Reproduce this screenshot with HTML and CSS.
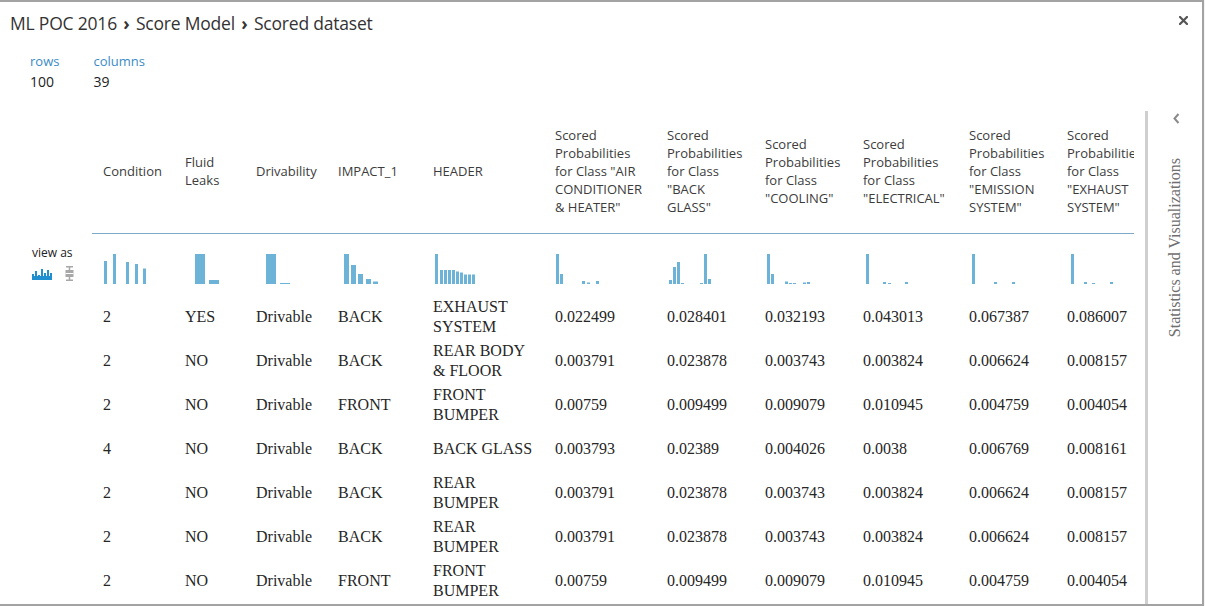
FILE: index.html
```html
<!DOCTYPE html>
<html lang="en">
<head>
<meta charset="utf-8">
<title>Scored dataset</title>
<link rel="stylesheet" href="styles.css">
</head>
<body>
<div class="dialog">
  <header class="titlebar">
    <h1 class="crumbs">ML POC 2016 <span class="sep">›</span> Score Model <span class="sep">›</span> Scored dataset</h1>
    <button class="close" aria-label="Close">
      <svg width="9" height="9" viewBox="0 0 9 9"><path d="M1 1 L8 8 M8 1 L1 8" stroke="#555" stroke-width="2.2" stroke-linecap="square"/></svg>
    </button>
  </header>
  <div class="content">
    <div class="main">
      <div class="stats">
        <div class="stat"><div class="stat-label">rows</div><div class="stat-value">100</div></div>
        <div class="stat"><div class="stat-label">columns</div><div class="stat-value">39</div></div>
      </div>
      <div class="grid-area">
        <div class="viewas">
          <div class="viewas-label">view as</div>
          <div class="viewas-icons">
            <svg class="ico-hist" width="20" height="12" viewBox="0 0 20 12"><path d="M0 12 V6 H2 V8 H3 V3 H5 V8 H6 V7 H8 V8 H9 V1 H11 V8 H12 V5 H14 V8 H15 V2 H17 V8 H18 V5 H20 V12 Z" fill="#1f8fcf"/></svg>
            <svg class="ico-box" width="9" height="15" viewBox="0 0 9 15"><path d="M1 0.75 H8 M1 14.25 H8 M4.5 0.75 V14.25" stroke="#a8a8a8" stroke-width="1.5"/><rect x="0.5" y="4" width="8" height="7" fill="#a8a8a8"/><path d="M0.5 7.5 H8.5" stroke="#fff" stroke-width="1"/></svg>
          </div>
        </div>
        <div class="table-wrap">
          <table class="data">
            <colgroup>
              <col class="w82"><col class="w71"><col class="w82"><col class="w95"><col class="w122"><col class="w112"><col class="w98"><col class="w98"><col class="w106"><col class="w98"><col class="w110">
            </colgroup>
            <thead>
              <tr class="head">
                <th>Condition</th>
                <th>Fluid<br>Leaks</th>
                <th>Drivability</th>
                <th>IMPACT_1</th>
                <th>HEADER</th>
                <th>Scored<br>Probabilities<br>for Class "AIR<br>CONDITIONER<br>&amp; HEATER"</th>
                <th>Scored<br>Probabilities<br>for Class<br>"BACK<br>GLASS"</th>
                <th>Scored<br>Probabilities<br>for Class<br>"COOLING"</th>
                <th>Scored<br>Probabilities<br>for Class<br>"ELECTRICAL"</th>
                <th>Scored<br>Probabilities<br>for Class<br>"EMISSION<br>SYSTEM"</th>
                <th>Scored<br>Probabilities<br>for Class<br>"EXHAUST<br>SYSTEM"</th>
              </tr>
              <tr class="spark">
                <td><svg width="60" height="30"><rect x="1" y="7" width="3" height="23"/><rect x="10" y="0" width="3" height="30"/><rect x="23" y="8" width="3" height="22"/><rect x="32" y="10" width="3" height="20"/><rect x="40" y="14.5" width="3" height="15.5"/></svg></td>
                <td><svg width="60" height="30"><rect x="10" y="0" width="10" height="30"/><rect x="24" y="26" width="10" height="4"/></svg></td>
                <td><svg width="60" height="30"><rect x="10" y="0" width="10" height="30"/><rect x="24" y="29" width="10" height="1"/></svg></td>
                <td><svg width="60" height="30"><rect x="6" y="0" width="5" height="30"/><rect x="13" y="11" width="5" height="19"/><rect x="20" y="20" width="5" height="10"/><rect x="28" y="25" width="5" height="5"/><rect x="35" y="27.5" width="5" height="2.5"/></svg></td>
                <td><svg width="60" height="30"><rect x="2" y="0" width="3" height="30"/><rect x="7" y="16" width="3" height="14"/><rect x="11" y="16" width="3" height="14"/><rect x="15" y="16" width="3" height="14"/><rect x="19" y="16" width="3" height="14"/><rect x="23" y="17.5" width="3" height="12.5"/><rect x="27" y="18.5" width="3" height="11.5"/><rect x="31" y="20.5" width="3" height="9.5"/><rect x="35" y="20.5" width="3" height="9.5"/><rect x="39" y="20.5" width="3" height="9.5"/></svg></td>
                <td><svg width="60" height="30"><rect x="1" y="0" width="3" height="30"/><rect x="5" y="20" width="3" height="10"/><rect x="27" y="27" width="3" height="3"/><rect x="32" y="28.5" width="3" height="1.5"/><rect x="41" y="27" width="3" height="3"/></svg></td>
                <td><svg width="60" height="30"><rect x="2" y="26" width="3" height="4"/><rect x="6" y="13" width="3" height="17"/><rect x="10" y="8" width="3" height="22"/><rect x="14" y="29" width="3" height="1"/><rect x="33" y="29" width="3" height="1"/><rect x="37" y="0" width="3" height="30"/><rect x="41" y="25" width="3" height="5"/></svg></td>
                <td><svg width="60" height="30"><rect x="2" y="0" width="3" height="30"/><rect x="6" y="20" width="3" height="10"/><rect x="20" y="27.5" width="3" height="2.5"/><rect x="24" y="29" width="3" height="1"/><rect x="28" y="29" width="3" height="1"/><rect x="38" y="28.5" width="3" height="1.5"/><rect x="42" y="28" width="3" height="2"/></svg></td>
                <td><svg width="60" height="30"><rect x="3" y="0" width="3" height="30"/><rect x="20" y="28" width="3" height="2"/><rect x="25" y="29" width="3" height="1"/><rect x="42" y="28" width="3" height="2"/></svg></td>
                <td><svg width="60" height="30"><rect x="3" y="0" width="3" height="30"/><rect x="25" y="28" width="3" height="2"/><rect x="43" y="28" width="3" height="2"/></svg></td>
                <td><svg width="60" height="30"><rect x="4" y="0" width="3" height="30"/><rect x="17" y="28" width="3" height="2"/><rect x="25" y="29" width="3" height="1"/><rect x="43" y="28" width="3" height="2"/></svg></td>
              </tr>
            </thead>
            <tbody>
              <tr><td>2</td><td>YES</td><td>Drivable</td><td>BACK</td><td>EXHAUST SYSTEM</td><td>0.022499</td><td>0.028401</td><td>0.032193</td><td>0.043013</td><td>0.067387</td><td>0.086007</td></tr>
              <tr><td>2</td><td>NO</td><td>Drivable</td><td>BACK</td><td>REAR BODY &amp; FLOOR</td><td>0.003791</td><td>0.023878</td><td>0.003743</td><td>0.003824</td><td>0.006624</td><td>0.008157</td></tr>
              <tr><td>2</td><td>NO</td><td>Drivable</td><td>FRONT</td><td>FRONT BUMPER</td><td>0.00759</td><td>0.009499</td><td>0.009079</td><td>0.010945</td><td>0.004759</td><td>0.004054</td></tr>
              <tr><td>4</td><td>NO</td><td>Drivable</td><td>BACK</td><td>BACK GLASS</td><td>0.003793</td><td>0.02389</td><td>0.004026</td><td>0.0038</td><td>0.006769</td><td>0.008161</td></tr>
              <tr><td>2</td><td>NO</td><td>Drivable</td><td>BACK</td><td>REAR BUMPER</td><td>0.003791</td><td>0.023878</td><td>0.003743</td><td>0.003824</td><td>0.006624</td><td>0.008157</td></tr>
              <tr><td>2</td><td>NO</td><td>Drivable</td><td>BACK</td><td>REAR BUMPER</td><td>0.003791</td><td>0.023878</td><td>0.003743</td><td>0.003824</td><td>0.006624</td><td>0.008157</td></tr>
              <tr><td>2</td><td>NO</td><td>Drivable</td><td>FRONT</td><td>FRONT BUMPER</td><td>0.00759</td><td>0.009499</td><td>0.009079</td><td>0.010945</td><td>0.004759</td><td>0.004054</td></tr>
            </tbody>
          </table>
        </div>
      </div>
    </div>
    <aside class="sidebar">
      <svg class="chev" width="7" height="11" viewBox="0 0 7 11"><path d="M5.5 1 L1.5 5.5 L5.5 10" fill="none" stroke="#8a8a8a" stroke-width="2"/></svg>
      <div class="side-title">Statistics and Visualizations</div>
    </aside>
  </div>
</div>
</body>
</html>
```

FILE: styles.css
```css
* { box-sizing: border-box; }
html, body { margin: 0; padding: 0; background: #f4f4f4; }
body { width: 1205px; height: 606px; overflow: hidden; font-family: "Open Sans", "Noto Sans", sans-serif; color: #333; }

.dialog {
  width: 1204px;
  height: 606px;
  background: #fff;
  border-top: 2px solid #a3a3a3;
  border-right: 2px solid #a3a3a3;
  border-bottom: 2px solid #a3a3a3;
  display: flex;
  flex-direction: column;
  overflow: hidden;
}

.titlebar {
  height: 44px;
  display: flex;
  align-items: center;
  justify-content: space-between;
  padding: 0 12px 0 10px;
  flex: none;
}
.crumbs {
  margin: -2px 0 0 0;
  font-size: 17.5px;
  font-weight: 400;
  color: #333;
  letter-spacing: -0.2px;
}
.crumbs .sep { font-weight: 700; color: #333; padding: 0 2px; }
.close {
  border: 0;
  background: none;
  padding: 0;
  width: 14px;
  height: 14px;
  margin-top: -8px;
  display: flex;
  align-items: center;
  justify-content: center;
}

.content { flex: 1; display: flex; min-height: 0; }
.main { width: 1145px; flex: none; display: flex; flex-direction: column; min-height: 0; }

.stats { display: flex; gap: 34px; padding: 6px 0 0 30px; flex: none; }
.stat-label { font-size: 13px; line-height: 18px; color: #3a8cc6; }
.stat-value { font-size: 14px; line-height: 24px; color: #222; }

.grid-area { display: flex; margin-top: 15px; flex: 1; min-height: 0; }
.viewas { width: 92px; flex: none; padding: 137px 0 0 32px; }
.viewas-label { font-size: 12px; line-height: 14px; color: #222; }
.viewas-icons { display: flex; align-items: flex-end; gap: 13px; margin-top: 6px; }
.ico-box { margin-bottom: -1px; }

.table-wrap { width: 1042px; flex: none; overflow: hidden; }
.data { border-collapse: collapse; table-layout: fixed; width: 1074px; }
.w82 { width: 82px; } .w71 { width: 71px; } .w95 { width: 95px; } .w122 { width: 122px; }
.w112 { width: 112px; } .w98 { width: 98px; } .w106 { width: 106px; } .w110 { width: 110px; }

.data th {
  font-weight: 400;
  font-size: 13px;
  line-height: 18px;
  color: #3c3c3c;
  text-align: left;
  vertical-align: middle;
  white-space: nowrap;
  padding: 0 0 0 11px;
  height: 124px;
  border-bottom: 1px solid #7fa9c9;
}
.spark td { height: 62px; padding: 20px 0 0 11px; vertical-align: top; }
.spark svg { display: block; fill: #6db3d7; }

.data tbody td {
  font-family: "Liberation Serif", "Times New Roman", serif;
  font-size: 16px;
  line-height: 20px;
  color: #262626;
  height: 44px;
  padding: 0 8px 0 11px;
  vertical-align: middle;
}

.sidebar {
  flex: 1;
  margin-top: 65px;
  border-left: 3px solid #cfcfcf;
  display: flex;
  flex-direction: column;
  align-items: center;
  padding-top: 2px;
}
.chev { display: block; margin-left: 2px; }
.side-title {
  margin-top: 34px;
  writing-mode: vertical-rl;
  transform: rotate(180deg);
  font-family: "Liberation Serif", "Times New Roman", serif;
  font-size: 16px;
  color: #6f6f6f;
  white-space: nowrap;
}
```
